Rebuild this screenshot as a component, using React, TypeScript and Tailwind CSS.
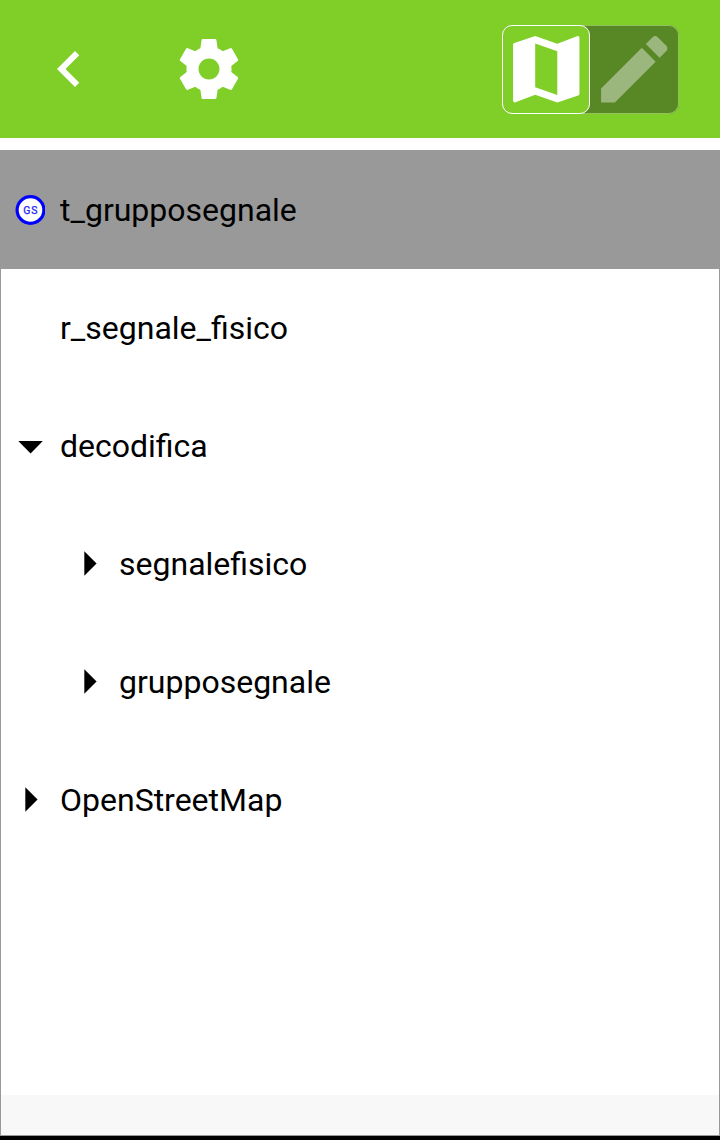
type Marker = 'symbol' | 'open' | 'closed' | 'none'

interface Layer {
  name: string
  marker: Marker
  nested?: boolean
  selected?: boolean
}

const layers: Layer[] = [
  { name: 't_grupposegnale', marker: 'symbol', selected: true },
  { name: 'r_segnale_fisico', marker: 'none' },
  { name: 'decodifica', marker: 'open' },
  { name: 'segnalefisico', marker: 'closed', nested: true },
  { name: 'grupposegnale', marker: 'closed', nested: true },
  { name: 'OpenStreetMap', marker: 'closed' },
]

function Icon({ d, className }: { d: string; className: string }) {
  return (
    <svg viewBox="0 0 24 24" fill="currentColor" className={className}>
      <path d={d} />
    </svg>
  )
}

function LayerMarker({ marker }: { marker: Marker }) {
  if (marker === 'symbol') {
    return (
      <svg viewBox="0 0 30 30" className="size-[30px]">
        <circle cx="15.5" cy="15" r="13.4" fill="#fff" stroke="#0000ff" strokeWidth="3.2" />
        <text x="15.9" y="18.8" textAnchor="middle" fontSize="10.5" letterSpacing="1" fill="#2222f5" stroke="#2222f5" strokeWidth="0.25" fontFamily="Roboto, sans-serif">
          GS
        </text>
      </svg>
    )
  }
  if (marker === 'open') {
    return (
      <svg viewBox="0 0 30 30" className="size-[30px]">
        <path d="M3.3 10H27.8L15.6 22.5Z" />
      </svg>
    )
  }
  if (marker === 'closed') {
    return (
      <svg viewBox="0 0 30 30" className="size-[30px]">
        <path d="M10.3 2.2V26.8L22.6 14.5Z" />
      </svg>
    )
  }
  return null
}

function LayerRow({ layer }: { layer: Layer }) {
  return (
    <li
      className={`flex h-[118px] items-center ${layer.nested ? 'pl-[73px]' : 'pl-[14px]'} ${layer.selected ? 'bg-[#999999]' : ''}`}
    >
      <span className="mr-[15px] size-[30px] shrink-0">
        <LayerMarker marker={layer.marker} />
      </span>
      <span className="text-[32px] leading-[38px]">{layer.name}</span>
    </li>
  )
}

export default function App() {
  return (
    <div className="flex h-[1140px] w-[720px] flex-col bg-white font-['Roboto',sans-serif] text-black">
      <header className="flex h-[138px] shrink-0 items-center bg-[#80cf28] pl-[33px] pr-[41px] text-white">
        <button aria-label="Back">
          <Icon className="size-[72px]" d="M15.41 7.41 14 6l-6 6 6 6 1.41-1.41L10.83 12z" />
        </button>
        <button aria-label="Settings" className="ml-[68px]">
          <Icon
            className="size-[72px]"
            d="M19.43 12.98c.04-.32.07-.64.07-.98s-.03-.66-.07-.98l2.11-1.65c.19-.15.24-.42.12-.64l-2-3.46c-.12-.22-.39-.3-.61-.22l-2.49 1c-.52-.4-1.08-.73-1.69-.98l-.38-2.65C14.46 2.18 14.25 2 14 2h-4c-.25 0-.46.18-.49.42l-.38 2.65c-.61.25-1.17.59-1.69.98l-2.49-1c-.23-.09-.49 0-.61.22l-2 3.46c-.13.22-.07.49.12.64l2.11 1.65c-.04.32-.07.65-.07.98s.03.66.07.98l-2.11 1.65c-.19.15-.24.42-.12.64l2 3.46c.12.22.39.3.61.22l2.49-1c.52.4 1.08.73 1.69.98l.38 2.65c.03.24.24.42.49.42h4c.25 0 .46-.18.49-.42l.38-2.65c.61-.25 1.17-.59 1.69-.98l2.49 1c.23.09.49 0 .61-.22l2-3.46c.12-.22.07-.49-.12-.64l-2.11-1.65zM12 15.5c-1.93 0-3.5-1.57-3.5-3.5s1.57-3.5 3.5-3.5 3.5 1.57 3.5 3.5-1.57 3.5-3.5 3.5z"
          />
        </button>
        <div className="ml-auto flex h-[89px] w-[177px] rounded-[10px] bg-[#588726] shadow-[inset_0_0_0_1px_#91c15d]">
          <button
            aria-label="Browse"
            className="flex h-[89px] w-[88px] items-center justify-center rounded-[10px] border border-white bg-[#80cf28] outline-1 -outline-offset-1 outline-white/10"
          >
            <Icon
              className="size-[88.5px] shrink-0"
              d="M20.5 3l-.16.03L15 5.1 9 3 3.36 4.9c-.21.07-.36.25-.36.48V20.5c0 .28.22.5.5.5l.16-.03L9 18.9l6 2.1 5.64-1.9c.21-.07.36-.25.36-.48V3.5c0-.28-.22-.5-.5-.5zM15 19l-6-2.11V5l6 2.11V19z"
            />
          </button>
          <button aria-label="Digitize" className="flex size-[89px] items-center justify-center text-[#9bb77d]">
            <Icon
              className="size-[88.5px] shrink-0"
              d="M3 17.25V21h3.75L17.81 9.94l-3.75-3.75L3 17.25zM20.71 7.04c.39-.39.39-1.02 0-1.41l-2.34-2.34c-.39-.39-1.02-.39-1.41 0l-1.83 1.83 3.75 3.75 1.83-1.83z"
            />
          </button>
        </div>
      </header>
      <main className="mt-3 flex flex-1 flex-col border border-[#999999]">
        <ul className="flex-1">
          {layers.map((layer) => (
            <LayerRow key={layer.name} layer={layer} />
          ))}
        </ul>
        <div className="h-10 bg-[#f8f8f8]" />
      </main>
      <div className="h-1 shrink-0 bg-black" />
    </div>
  )
}
